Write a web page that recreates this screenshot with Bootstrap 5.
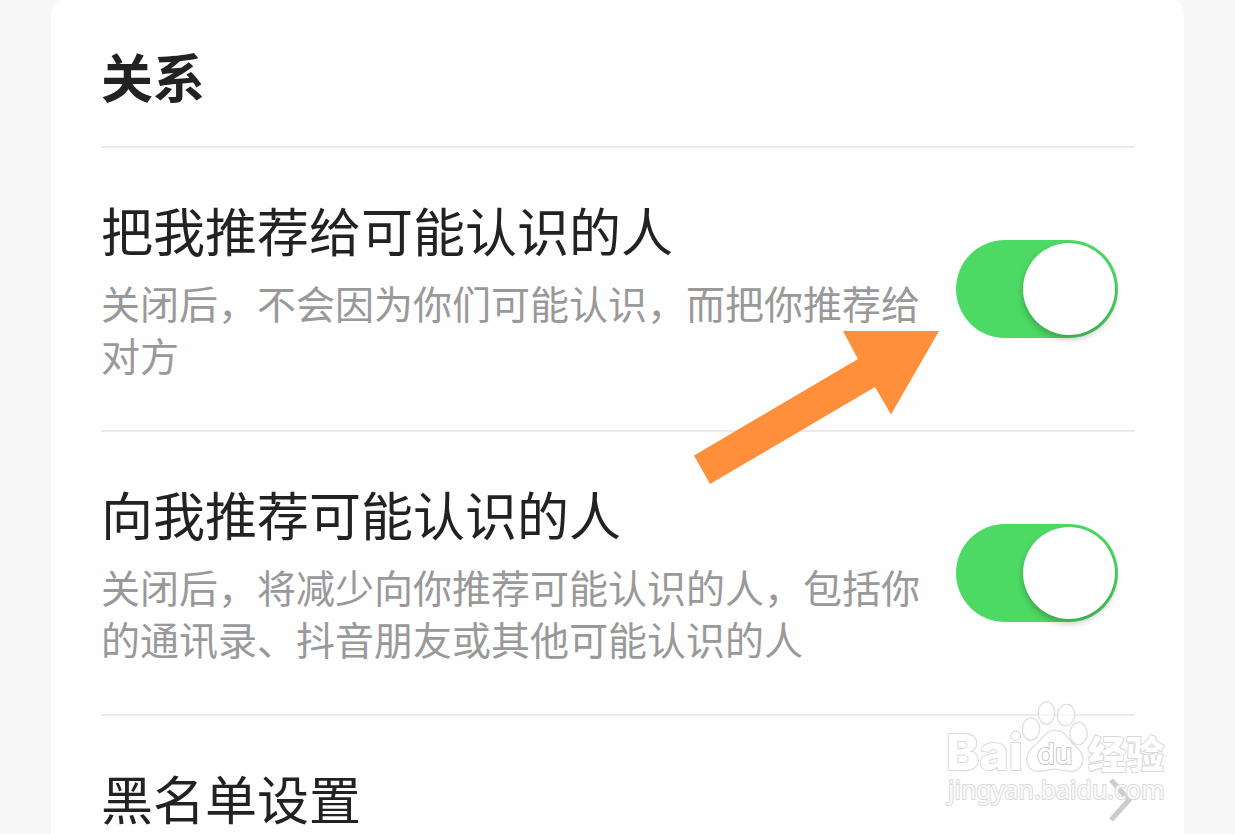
<!DOCTYPE html>
<html lang="zh-CN">
<head>
<meta charset="utf-8">
<meta name="viewport" content="width=device-width, initial-scale=1">
<title>关系</title>
<link href="https://cdn.jsdelivr.net/npm/bootstrap@5.3.0/dist/css/bootstrap.min.css" rel="stylesheet">
<style>
body { background: #f7f7f7; color: #222; font-family: "Noto Sans CJK SC", sans-serif; }
.screen { padding: 0 51px; }
.panel { background: #fefefe; padding: 0 49px 0 50px; border-radius: 10px 10px 0 0 / 16px 16px 0 0; }
.panel-title { font-size: 52px; line-height: 76px; font-weight: 700; padding: 38px 0 32px; border-bottom: 2px solid #ebebeb; }
.setting { padding: 44px 0 42px; border-bottom: 2px solid #ebebeb; }
.setting-text { padding-bottom: 8px; }
.setting-name { font-size: 52px; line-height: 76px; }
.setting-note { font-size: 39px; line-height: 52px; color: #999; margin-top: 8px; }
.setting-toggle { padding: 0 17px 0 36px; min-height: 0; }
.setting-toggle .form-check-input { position: relative; width: 162px; height: 98px; margin: 0; border: 0; border-radius: 49px; background: #4cd964; float: none; display: block; }
.setting-toggle .form-check-input::before { content: ""; position: absolute; top: 3px; left: 3px; width: 92px; height: 92px; border-radius: 50%; background: #fff; box-shadow: 0 4px 6px rgba(0, 0, 0, .24); }
.setting-toggle .form-check-input:checked::before { left: auto; right: 3px; }
.setting-toggle .form-check-input:not(:checked) { background: #e5e5e5; }
.pointer { top: 183px; right: 196px; }
.brand { right: 60px; bottom: 24px; }
</style>
</head>
<body>
<div class="screen vh-100 overflow-hidden position-relative">
  <main class="panel min-vh-100">
    <h1 class="panel-title m-0">关系</h1>

    <div class="setting d-flex align-items-center position-relative">
      <div class="setting-text flex-grow-1">
        <label class="setting-name d-block" for="recommendMe">把我推荐给可能认识的人</label>
        <p class="setting-note mb-0" id="noteMe">关闭后，不会因为你们可能认识，而把你推荐给对方</p>
      </div>
      <div class="setting-toggle form-check form-switch flex-shrink-0">
        <input class="form-check-input" type="checkbox" role="switch" id="recommendMe" aria-describedby="noteMe" checked>
      </div>
      <svg class="pointer position-absolute pe-none" width="245" height="154" viewBox="0 0 245 154" aria-hidden="true">
        <path d="M0 124.500 164 28 149 0H245L197 83.500 181 56 16 153Z" fill="#ff8f3b"/>
      </svg>
    </div>

    <div class="setting d-flex align-items-center">
      <div class="setting-text flex-grow-1">
        <label class="setting-name d-block" for="recommendOthers">向我推荐可能认识的人</label>
        <p class="setting-note mb-0" id="noteOthers">关闭后，将减少向你推荐可能认识的人，包括你的通讯录、抖音朋友或其他可能认识的人</p>
      </div>
      <div class="setting-toggle form-check form-switch flex-shrink-0">
        <input class="form-check-input" type="checkbox" role="switch" id="recommendOthers" aria-describedby="noteOthers" checked>
      </div>
    </div>

    <a class="setting d-flex align-items-center justify-content-between text-reset text-decoration-none border-0" href="#blocklist">
      <span class="setting-name">黑名单设置</span>
      <svg width="28" height="52" viewBox="0 0 28 52" fill="none" stroke="#ccc" stroke-width="5" aria-hidden="true"><path d="M4 8 22 28 4 48"/></svg>
    </a>
  </main>

  <svg class="brand position-absolute pe-none" width="230" height="110" viewBox="0 0 230 110" role="img" aria-label="Baidu 经验">
    <g fill="#fff" stroke="#d8d8d8" stroke-width="2" paint-order="stroke" stroke-linejoin="round">
      <text x="1" y="70" font-size="50" font-family="Inter, sans-serif" font-weight="800">Bai</text>
      <g fill-opacity=".6" stroke-width="1.500">
        <ellipse cx="86" cy="29" rx="8.500" ry="11"/>
        <ellipse cx="101.500" cy="13" rx="8" ry="11"/>
        <ellipse cx="121" cy="15" rx="8.500" ry="10.500" transform="rotate(8 121 15)"/>
        <ellipse cx="133.500" cy="33.500" rx="8.500" ry="11"/>
        <path d="M110 30.500C101 30.500 98 38 93 43 87 48 81 53 82 61 83 69 89 72 96 71 103 70 106 69 110 69 116 69 122 72 129 71 136 69 139 62 137 55 135 49 129 46 125 41 121 35 118 30.500 110 30.500Z"/>
      </g>
      <text x="92" y="64" font-family="Inter, sans-serif" font-weight="500" font-size="29" stroke="#c8c8c8">du</text>
      <text x="143" y="68" font-family="Noto Sans CJK SC, sans-serif" font-weight="900" font-size="38">经验</text>
      <text x="3" y="99" font-family="Noto Sans, sans-serif" font-size="25" fill-opacity=".85" stroke="#dcdcdc">jingyan.baidu.com</text>
    </g>
  </svg>
</div>
<script src="https://cdn.jsdelivr.net/npm/bootstrap@5.3.0/dist/js/bootstrap.bundle.min.js"></script>
</body>
</html>
